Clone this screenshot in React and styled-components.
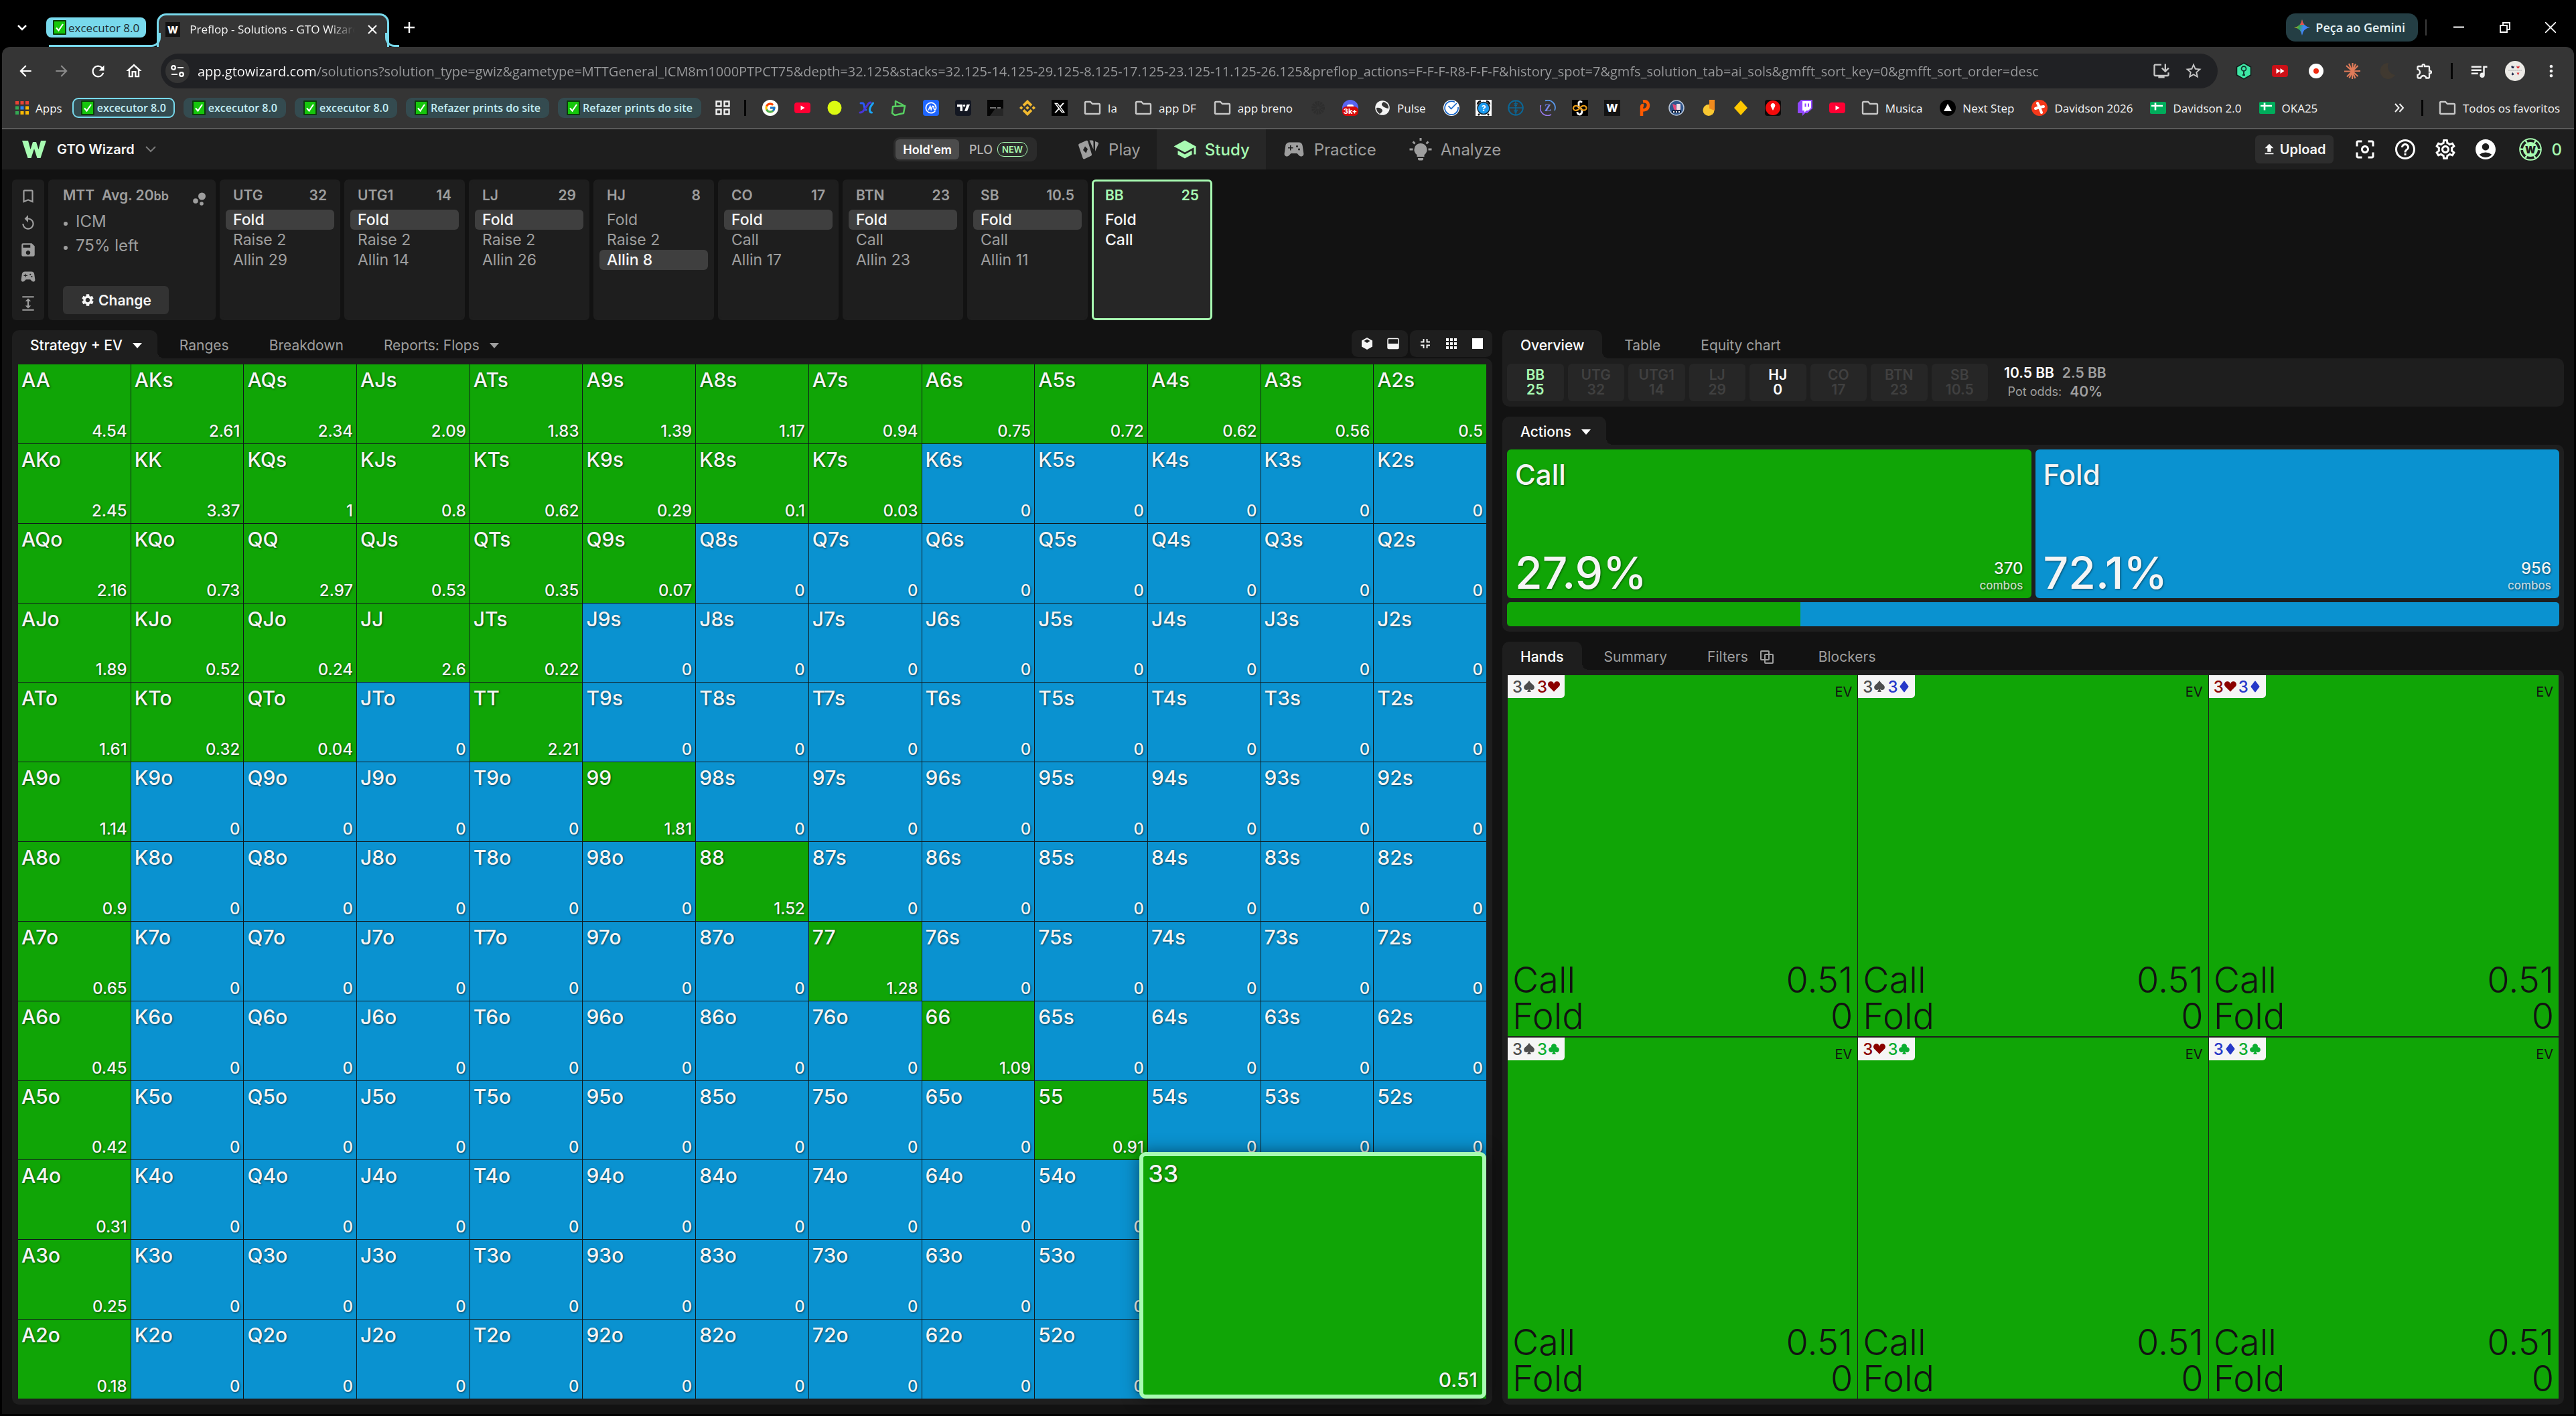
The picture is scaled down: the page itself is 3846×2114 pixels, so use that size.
import React from "react";
import styled, { createGlobalStyle, css } from "styled-components";
import {
  MdAccountCircle,
  MdArrowBack,
  MdArrowForward,
  MdBookmarkBorder,
  MdCenterFocusWeak,
  MdExpand,
  MdHelpOutline,
  MdMoreVert,
  MdOutlineExtension,
  MdOutlineHome,
  MdOutlineInstallDesktop,
  MdOutlineSettings,
  MdQueueMusic,
  MdRefresh,
  MdReplay,
  MdSave,
  MdSchool,
  MdSettings,
  MdSportsEsports,
  MdStarBorder,
  MdUpload,
} from "react-icons/md";
import {
  BsSuitClubFill,
  BsSuitDiamondFill,
  BsSuitHeartFill,
  BsSuitSpadeFill,
} from "react-icons/bs";
import { FcGoogle } from "react-icons/fc";
import { FaXTwitter } from "react-icons/fa6";
import { SiBinance } from "react-icons/si";

const GREEN = "#10a506";
const BLUE = "#0a92d0";
const MINT = "#a8fbb2";

const RANKS = ["A", "K", "Q", "J", "T", "9", "8", "7", "6", "5", "4", "3", "2"];

// EV per row, cells left out are 0
const EVS = [
  [4.54, 2.61, 2.34, 2.09, 1.83, 1.39, 1.17, 0.94, 0.75, 0.72, 0.62, 0.56, 0.5],
  [2.45, 3.37, 1, 0.8, 0.62, 0.29, 0.1, 0.03],
  [2.16, 0.73, 2.97, 0.53, 0.35, 0.07],
  [1.89, 0.52, 0.24, 2.6, 0.22],
  [1.61, 0.32, 0.04, 0, 2.21],
  [1.14, 0, 0, 0, 0, 1.81],
  [0.9, 0, 0, 0, 0, 0, 1.52],
  [0.65, 0, 0, 0, 0, 0, 0, 1.28],
  [0.45, 0, 0, 0, 0, 0, 0, 0, 1.09],
  [0.42, 0, 0, 0, 0, 0, 0, 0, 0, 0.91],
  [0.31],
  [0.25],
  [0.18],
];

const handName = (r, c) => {
  if (r === c) return RANKS[r] + RANKS[c];
  return r < c ? RANKS[r] + RANKS[c] + "s" : RANKS[c] + RANKS[r] + "o";
};

const positions = [
  { name: "UTG", stack: "32", actions: ["Fold", "Raise 2", "Allin 29"], picked: 0 },
  { name: "UTG1", stack: "14", actions: ["Fold", "Raise 2", "Allin 14"], picked: 0 },
  { name: "LJ", stack: "29", actions: ["Fold", "Raise 2", "Allin 26"], picked: 0 },
  { name: "HJ", stack: "8", actions: ["Fold", "Raise 2", "Allin 8"], picked: 2 },
  { name: "CO", stack: "17", actions: ["Fold", "Call", "Allin 17"], picked: 0 },
  { name: "BTN", stack: "23", actions: ["Fold", "Call", "Allin 23"], picked: 0 },
  { name: "SB", stack: "10.5", actions: ["Fold", "Call", "Allin 11"], picked: 0 },
  { name: "BB", stack: "25", actions: ["Fold", "Call"], active: true },
];

const players = [
  { name: "BB", stack: "25", tone: "hero" },
  { name: "UTG", stack: "32" },
  { name: "UTG1", stack: "14" },
  { name: "LJ", stack: "29" },
  { name: "HJ", stack: "0", tone: "villain" },
  { name: "CO", stack: "17" },
  { name: "BTN", stack: "23" },
  { name: "SB", stack: "10.5" },
];

const SUITS = {
  s: { color: "#4d4d4d", Icon: BsSuitSpadeFill },
  h: { color: "#8b0000", Icon: BsSuitHeartFill },
  d: { color: "#2638c8", Icon: BsSuitDiamondFill },
  c: { color: "#0bad30", Icon: BsSuitClubFill },
};
const combos = ["sh", "sd", "hd", "sc", "hc", "dc"];

const URL_TEXT =
  "app.gtowizard.com/solutions?solution_type=gwiz&gametype=MTTGeneral_ICM8m1000PTPCT75&depth=32.125&stacks=32.125-14.125-29.125-8.125-17.125-23.125-11.125-26.125&preflop_actions=F-F-F-R8-F-F-F&history_spot=7&gmfs_solution_tab=ai_sols&gmfft_sort_key=0&gmfft_sort_order=desc";

const Check = () => (
  <svg width="20" height="22" viewBox="0 0 20 22">
    <rect width="20" height="22" rx="1" fill="#0b3d0b" />
    <rect x="2" y="2" width="16" height="18" fill="#16c60c" />
    <path d="M5 11.5l3.5 4L15 6" fill="none" stroke="#fff" strokeWidth="2.2" />
  </svg>
);

const FolderIcon = () => (
  <svg width="26" height="24" viewBox="0 0 26 24" fill="none" stroke="#c7c7c7" strokeWidth="2.4">
    <path d="M2 4.500Q2 3 3.500 3H10l3 3h9.500Q24 6 24 7.500V19.500Q24 21 22.500 21H3.500Q2 21 2 19.500z" />
  </svg>
);

const YoutubeIcon = () => (
  <svg width="24" height="24" viewBox="0 0 24 24">
    <rect y="4" width="24" height="16" rx="4" fill="#ff0033" />
    <path d="M9.500 8.500v7l6-3.500z" fill="#fff" />
  </svg>
);

const SheetIcon = () => (
  <svg width="24" height="24" viewBox="0 0 24 24">
    <rect y="3" width="24" height="18" rx="2" fill="#00ac5b" />
    <path d="M2 9h17M8 4.500v11" stroke="#fff" strokeWidth="2.6" />
  </svg>
);

const WFavicon = ({ size = 22 }) => (
  <svg width={size} height={size} viewBox="0 0 22 22">
    <rect width="22" height="22" fill="#131313" />
    <text x="11" y="16.500" textAnchor="middle" fontFamily="Inter, sans-serif" fontWeight="800" fontSize="15" fill="#fff">
      W
    </text>
  </svg>
);

const favs = [
  {
    id: "google",
    icon: (
      <svg width="24" height="24" viewBox="0 0 24 24">
        <circle cx="12" cy="12" r="12" fill="#fff" />
        <FcGoogle x={3} y={3} size={18} />
      </svg>
    ),
  },
  { id: "youtube", icon: <YoutubeIcon /> },
  {
    id: "lime",
    icon: (
      <svg width="24" height="24" viewBox="0 0 24 24">
        <circle cx="12" cy="12" r="10.500" fill="#dcfa12" />
      </svg>
    ),
  },
  {
    id: "wave",
    icon: (
      <svg width="24" height="24" viewBox="0 0 24 24" fill="none" strokeWidth="3" strokeLinecap="round">
        <path d="M3 5h2.500q2 0 2.500 3l1 5q.5 2 2 2" stroke="#2a5bff" />
        <path d="M2 19q4 0 6-4l5-7q2-4 5-4" stroke="#4a35d8" />
        <path d="M19.500 19q-3 0-3-4t5-10" stroke="#1ba4f5" />
      </svg>
    ),
  },
  {
    id: "bag",
    icon: (
      <svg width="24" height="24" viewBox="0 0 24 24" fill="none" stroke="#58cf62" strokeWidth="2.500" strokeLinejoin="round">
        <path d="M3 10l18-1-2 11-13 3-4-3z" />
        <path d="M7 9V2l12 6" />
      </svg>
    ),
  },
  {
    id: "cmc",
    icon: (
      <svg width="24" height="24" viewBox="0 0 24 24" fill="none" stroke="#fff" strokeWidth="1.700">
        <rect width="24" height="24" rx="4" fill="#1f66ff" stroke="none" />
        <path d="M18.500 16a7.600 7.600 0 1 1 1.100-4.500q0 3-1.800 2.800T16.200 12V10l-2-.5-2 5-1.500-5-2.500 6" />
      </svg>
    ),
  },
  {
    id: "tv",
    icon: (
      <svg width="24" height="24" viewBox="0 0 24 24" fill="#fff">
        <rect width="24" height="24" rx="4" fill="#131722" />
        <path d="M3 7h8v10H7.500v-6.500H3z" />
        <circle cx="13.500" cy="8.700" r="1.700" />
        <path d="M17.500 7H22l-4 10h-4z" />
      </svg>
    ),
  },
  {
    id: "black",
    icon: (
      <svg width="24" height="24" viewBox="0 0 24 24">
        <rect width="24" height="24" fill="#050505" />
        <path d="M4 24l8-11h12v11z" fill="#262626" />
        <path d="M4 12h9M15 12h5" stroke="#777" strokeWidth="2" />
      </svg>
    ),
  },
  { id: "binance", icon: <SiBinance size={24} color="#f3ba2f" /> },
  {
    id: "x",
    icon: (
      <svg width="24" height="24" viewBox="0 0 24 24">
        <rect width="24" height="24" fill="#000" />
        <FaXTwitter x={3} y={3} size={18} color="#fff" />
      </svg>
    ),
  },
  { id: "ia", icon: <FolderIcon />, label: "Ia" },
  { id: "appdf", icon: <FolderIcon />, label: "app DF" },
  { id: "appbreno", icon: <FolderIcon />, label: "app breno" },
  {
    id: "faded",
    icon: (
      <svg width="24" height="24" viewBox="0 0 24 24">
        <circle cx="12" cy="12" r="6" fill="none" stroke="#2e2e2e" strokeWidth="8" strokeDasharray="2 1" />
      </svg>
    ),
  },
  {
    id: "discord",
    icon: (
      <svg width="24" height="24" viewBox="0 0 24 24">
        <circle cx="12" cy="12" r="12" fill="#5865f2" />
        <path d="M7 10q0-3 3-3h4q3 0 3 3z" fill="#fff" />
        <rect y="10" width="24" height="14" rx="6" fill="#d60909" />
        <text x="12" y="21" textAnchor="middle" fontFamily="Inter, sans-serif" fontWeight="700" fontSize="11" fill="#fff">
          3k+
        </text>
      </svg>
    ),
  },
  {
    id: "pulse",
    label: "Pulse",
    icon: (
      <svg width="24" height="24" viewBox="0 0 24 24">
        <circle cx="12" cy="12" r="10.800" fill="#f4f4f4" />
        <path d="M3 12q5-1 8 2t-3 7Q3 18 3 12zM14 3q-5 3-2 6t9 4q1-7-7-10z" fill="#353535" />
      </svg>
    ),
  },
  {
    id: "clock",
    icon: (
      <svg width="24" height="24" viewBox="0 0 24 24" fill="none" stroke="#1565c8">
        <circle cx="12" cy="12" r="12" fill="#fff" stroke="none" />
        <path d="M17 3.500A10 10 0 1 0 22 11" strokeWidth="1.700" />
        <path d="M7.500 9l4 4.500L20 5" strokeWidth="1.700" />
      </svg>
    ),
  },
  {
    id: "alarm",
    icon: (
      <svg width="24" height="24" viewBox="0 0 24 24">
        <rect width="24" height="24" fill="#fff" />
        <path d="M6 21l-2 2M18 21l2 2M3 7q0-4 5-5M21 7q0-4-5-5" stroke="#111" strokeWidth="2.500" />
        <circle cx="12" cy="12.500" r="9" fill="#1c9bf0" stroke="#10202c" strokeWidth="1.500" />
        <text x="12" y="17" textAnchor="middle" fontFamily="Inter, sans-serif" fontWeight="700" fontSize="12" fill="#fff">
          ?
        </text>
      </svg>
    ),
  },
  {
    id: "scope",
    icon: (
      <svg width="24" height="24" viewBox="0 0 24 24" fill="none" stroke="#0b6796" strokeWidth="1.400">
        <circle cx="12" cy="12" r="10.800" strokeWidth="2" />
        <path d="M1 12h22M12 2v20M9 6h6M10 8.500h4M9 15.500h6M10 18h4" />
      </svg>
    ),
  },
  {
    id: "zring",
    icon: (
      <svg width="24" height="24" viewBox="0 0 24 24" fill="none" strokeWidth="1.700">
        <path d="M8 1.500A11 11 0 0 1 22 16" stroke="#5b9bf0" />
        <path d="M1.500 8A11 11 0 0 0 17 22" stroke="#9b7bf0" />
        <text x="12" y="17" textAnchor="middle" fontFamily="Liberation Serif, serif" fontWeight="700" fontSize="15" fill="#7f8cf0">
          Z
        </text>
      </svg>
    ),
  },
  {
    id: "knot",
    icon: (
      <svg width="24" height="24" viewBox="0 0 24 24" fill="none" strokeWidth="2.800">
        <rect width="24" height="24" fill="#000" />
        <path d="M15 4q-3-3-5 0v7q5 2 5 6t-3 5q-4 0-4-4" stroke="#fff" />
        <path d="M12 12q-5-5-9-2-3 4 2 6 4 0 7-4t7-3q5 3 1 6-4 2-8-3z" stroke="#e69a17" strokeWidth="2.200" />
      </svg>
    ),
  },
  { id: "wizard", icon: <WFavicon size={24} /> },
  {
    id: "orange",
    icon: (
      <svg width="24" height="24" viewBox="0 0 24 24" fill="none" stroke="#ff5a00" strokeWidth="4.500">
        <path d="M8 24V11q0-3 3-3M10 2.500q7-1 8 5 0 8-9 8" />
      </svg>
    ),
  },
  {
    id: "badge",
    icon: (
      <svg width="24" height="24" viewBox="0 0 24 24">
        <circle cx="12" cy="12" r="11" fill="#30568c" stroke="#b9c6d8" strokeWidth="1.500" />
        <path d="M6 6l5 2 1 9-4-3z" fill="#e8487c" />
        <rect x="12" y="6" width="6" height="9" rx="1" fill="#f2dbe4" />
        <path d="M5 17.500h14" stroke="#0d1b33" strokeWidth="4" />
        <path d="M7 18h2M11 18h2M15 18h2" stroke="#fff" strokeWidth="2" />
      </svg>
    ),
  },
  {
    id: "medal",
    icon: (
      <svg width="24" height="24" viewBox="0 0 24 24">
        <circle cx="12" cy="15.500" r="8.500" fill="#f9c832" />
        <path d="M13 0h8v16l-8-3z" fill="#f08a1d" />
      </svg>
    ),
  },
  {
    id: "diamond",
    icon: (
      <svg width="24" height="24" viewBox="0 0 24 24">
        <path d="M12 1l10 11-10 11L2 12z" fill="#ffc800" />
      </svg>
    ),
  },
  {
    id: "pin",
    icon: (
      <svg width="24" height="24" viewBox="0 0 24 24">
        <rect width="24" height="24" rx="4" fill="#0c0c0c" />
        <circle cx="12" cy="12" r="11" fill="#f50b0b" />
        <path d="M12 5a3.500 3.500 0 0 1 3 5l-3 6-3-6a3.500 3.500 0 0 1 3-5z" fill="#fff" />
      </svg>
    ),
  },
  {
    id: "twitch",
    icon: (
      <svg width="24" height="24" viewBox="0 0 24 24">
        <path d="M6 0h17v13l-8 7h-3l-4 4v-4H1V5z" fill="#9146ff" />
        <path d="M8 2h13v10l-4 4h-3l-3 3v-3H8z" fill="#fff" />
        <path d="M12.500 5.500v5M17 5.500v5" stroke="#9146ff" strokeWidth="2" />
      </svg>
    ),
  },
  { id: "youtube2", icon: <YoutubeIcon /> },
  { id: "musica", icon: <FolderIcon />, label: "Musica" },
  {
    id: "next",
    label: "Next Step",
    icon: (
      <svg width="24" height="24" viewBox="0 0 24 24">
        <circle cx="12" cy="12" r="12" fill="#000" />
        <path d="M12 6l6 11H6z" fill="#fff" />
      </svg>
    ),
  },
  {
    id: "dav26",
    label: "Davidson 2026",
    icon: (
      <svg width="24" height="24" viewBox="0 0 24 24">
        <circle cx="12" cy="12" r="12" fill="#f5391b" />
        <path d="M9 5l3 6 6-1M6 13l6-2 3 8" fill="none" stroke="#fff" strokeWidth="4" strokeLinecap="round" />
      </svg>
    ),
  },
  { id: "dav20", icon: <SheetIcon />, label: "Davidson 2.0" },
  { id: "oka25", icon: <SheetIcon />, label: "OKA25" },
];

const bookmarkChips = [
  { id: 1, text: "excecutor 8.0", open: true },
  { id: 2, text: "excecutor 8.0" },
  { id: 3, text: "excecutor 8.0" },
  { id: 4, text: "Refazer prints do site" },
  { id: 5, text: "Refazer prints do site" },
];

const extensions = [
  {
    id: "key",
    icon: (
      <svg width="24" height="26" viewBox="0 0 24 26">
        <path d="M12 1l10.500 6v12L12 25 1.500 19V7z" fill="#3ee6a4" stroke="#101b18" strokeWidth="1.500" />
        <circle cx="12" cy="9.500" r="3.500" fill="none" stroke="#123a30" strokeWidth="1.800" />
        <path d="M12 12v8M14 19h-4" stroke="#123a30" strokeWidth="2" />
      </svg>
    ),
  },
  {
    id: "speed",
    icon: (
      <svg width="24" height="24" viewBox="0 0 24 24">
        <rect y="3" width="24" height="18" rx="4" fill="#cc1017" />
        <path d="M6.500 8v8l6-4zM12.500 8v8l6-4z" fill="#fff" />
      </svg>
    ),
  },
  {
    id: "rec",
    icon: (
      <svg width="24" height="24" viewBox="0 0 24 24">
        <circle cx="12" cy="12" r="11" fill="#fff" />
        <circle cx="12" cy="12" r="4" fill="#ee2b12" />
      </svg>
    ),
  },
  {
    id: "burst",
    icon: (
      <svg width="24" height="24" viewBox="0 0 24 24" stroke="#e07b59" strokeWidth="2.200">
        <path d="M12.500 0L12 24M0 12.500L24 12M3 4l17.500 16M20.500 4L4 20.500M7 1l9.500 22M17 1.500L7.500 22.500" />
      </svg>
    ),
  },
  {
    id: "moon",
    icon: (
      <svg width="24" height="24" viewBox="0 0 24 24">
        <path d="M12 0A12 12 0 1 0 22 18 13 13 0 0 1 12 0z" fill="#403930" />
      </svg>
    ),
  },
  { id: "puzzle", icon: <MdOutlineExtension size={28} color="#f1f1f1" /> },
];

const CardsIcon = () => (
  <svg width="36" height="36" viewBox="0 0 36 36" fill="#9e9e9e">
    <path
      fillRule="evenodd"
      d="M4.500 9.500L14.500 5q2-.8 2.800 1.200l5.700 19q.6 1.800-1.200 2.600l-9.500 4.500q-2 .8-2.700-1.200L3.200 12Q2.700 10.300 4.500 9.500zM13 13.500l-3 5.500 4.500 4.500 2.500-6z"
    />
    <path d="M20 4.500h3.500q2 0 2 2V18l-6-13.500zM28 6l4 1.500q1.700.7 1 2.500L28 21z" />
  </svg>
);

const BulbIcon = () => (
  <svg width="36" height="36" viewBox="0 0 36 36" fill="#9e9e9e">
    <path d="M18 9a9.500 9.500 0 0 1 5.500 17.200V29h-11v-2.800A9.500 9.500 0 0 1 18 9zM14 31h8v1.500q0 2-2 2h-4q-2 0-2-2z" />
    <path d="M18 1v4M1.500 18h5M29.500 18h5M6.500 6.500l3 3M29.500 6.500l-3 3" stroke="#9e9e9e" strokeWidth="3" />
  </svg>
);

const ChipIcon = () => (
  <svg width="34" height="34" viewBox="0 0 34 34">
    <circle cx="17" cy="17" r="15.800" fill="none" stroke={MINT} strokeWidth="2" />
    <circle cx="17" cy="17" r="13" fill="none" stroke={MINT} strokeWidth="4" strokeDasharray="2.600 11" strokeDashoffset="1.300" />
    <circle cx="17" cy="17" r="11" fill={MINT} />
    <text x="17" y="22.500" textAnchor="middle" fontFamily="Inter, sans-serif" fontWeight="900" fontSize="15" fill="#1e1e1e">
      W
    </text>
  </svg>
);

const Logo = () => (
  <svg width="36" height="28" viewBox="0 0 36 28" fill={MINT}>
    <path d="M0 1h9l3.500 13L16 3h5l3.500 11L28 1h8l-8.500 26h-5L18 13l-4.500 14h-5z" />
  </svg>
);

const Gemini = () => (
  <svg width="24" height="24" viewBox="0 0 24 24">
    <defs>
      <linearGradient id="gem" x1="0" y1="0.300" x2="1" y2="0.600">
        <stop offset="0" stopColor="#f9ab00" />
        <stop offset="0.350" stopColor="#34a853" />
        <stop offset="0.600" stopColor="#4285f4" />
        <stop offset="1" stopColor="#3b7df5" />
      </linearGradient>
    </defs>
    <path d="M12 0q1.500 10.500 12 12-10.500 1.500-12 12Q10.500 13.500 0 12 10.500 10.500 12 0z" fill="url(#gem)" />
    <path d="M12 0q.8 5 3.500 8H8.500Q11.200 5 12 0z" fill="#e8504a" />
  </svg>
);

const Caret = () => (
  <CaretSvg width="14" height="8" viewBox="0 0 14 8" fill="currentColor">
    <path d="M0 0h14L7 8z" />
  </CaretSvg>
);

const CloneIcon = () => (
  <CloneSvg width="20" height="20" viewBox="0 0 20 20" fill="none" stroke="currentColor" strokeWidth="2">
    <rect x="1" y="1" width="12" height="13" rx="1" />
    <rect x="7" y="6" width="12" height="13" rx="1" />
  </CloneSvg>
);

function BrowserTabs() {
  return (
    <TabStrip>
      <StripButton aria-label="Search tabs">
        <svg width="16" height="10" viewBox="0 0 16 10" fill="none" stroke="#fff" strokeWidth="2.500">
          <path d="M2 2l6 6 6-6" />
        </svg>
      </StripButton>
      <TabGroup>
        <GroupChip>
          <Check />
          excecutor 8.0
        </GroupChip>
      </TabGroup>
      <BrowserTab>
        <WFavicon />
        <TabTitle>Preflop - Solutions - GTO Wizard</TabTitle>
        <TabClose aria-label="Close tab">
          <svg width="14" height="14" viewBox="0 0 14 14" stroke="#fff" strokeWidth="2">
            <path d="M1 1l12 12M13 1L1 13" />
          </svg>
        </TabClose>
      </BrowserTab>
      <StripButton aria-label="New tab">
        <svg width="16" height="16" viewBox="0 0 16 16" stroke="#fff" strokeWidth="2.400">
          <path d="M8 0v16M0 8h16" />
        </svg>
      </StripButton>
      <Spacer />
      <GeminiButton>
        <Gemini />
        Peça ao Gemini
      </GeminiButton>
      <StripDivider />
      <WindowButton aria-label="Minimize">
        <svg width="16" height="16" viewBox="0 0 16 16" stroke="#fff" strokeWidth="2">
          <path d="M0 7.500h16" />
        </svg>
      </WindowButton>
      <WindowButton aria-label="Restore">
        <svg width="16" height="16" viewBox="0 0 16 16" fill="none" stroke="#fff" strokeWidth="1.800">
          <path d="M1 5h10v10H1zM5 5V1h10v10h-4" />
        </svg>
      </WindowButton>
      <WindowButton aria-label="Close">
        <svg width="16" height="16" viewBox="0 0 16 16" stroke="#fff" strokeWidth="1.600">
          <path d="M0 0l16 16M16 0L0 16" />
        </svg>
      </WindowButton>
    </TabStrip>
  );
}

function BrowserToolbar() {
  return (
    <Toolbar>
      <NavRow>
        <NavButton aria-label="Back">
          <MdArrowBack size={26} color="#fff" />
        </NavButton>
        <NavButton aria-label="Forward">
          <MdArrowForward size={26} color="#8a8a8a" />
        </NavButton>
        <NavButton aria-label="Reload">
          <MdRefresh size={27} color="#fff" />
        </NavButton>
        <NavButton aria-label="Home">
          <MdOutlineHome size={28} color="#fff" />
        </NavButton>
        <Omnibox>
          <SiteInfo aria-label="Site information">
            <svg width="20" height="18" viewBox="0 0 20 18" fill="none" stroke="#fff" strokeWidth="2.200">
              <circle cx="4" cy="4" r="2.800" />
              <path d="M10 4h9M1 14h9" />
              <circle cx="16" cy="14" r="2.800" />
            </svg>
          </SiteInfo>
          <UrlInput aria-label="Address" defaultValue={URL_TEXT} spellCheck={false} />
          <OmniButton aria-label="Install">
            <MdOutlineInstallDesktop size={28} />
          </OmniButton>
          <OmniButton aria-label="Bookmark this page">
            <MdStarBorder size={28} />
          </OmniButton>
        </Omnibox>
        {extensions.map(({ id, icon }) => (
          <NavButton key={id} aria-label={id}>
            {icon}
          </NavButton>
        ))}
        <Divider />
        <NavButton aria-label="Media">
          <MdQueueMusic size={30} color="#f1f1f1" />
        </NavButton>
        <NavButton aria-label="Profile">
          <svg width="30" height="30" viewBox="0 0 30 30">
            <circle cx="15" cy="15" r="15" fill="#eceae6" />
            <path d="M9 7l1.500 1.500L11.500 7l1 1.500L14 7l-1 4h-3zM11.500 17l2 3-2 1.500-2-1.500z" fill="#1d2748" />
            <path d="M17 7l1.500 1.500L19.500 7l1 1.500L22 7l-1 4h-3zM17.500 17.500h4l-2 4z" fill="#d8393f" />
            <path d="M5 14h20" stroke="#a5a5a5" strokeDasharray="2 1" />
          </svg>
        </NavButton>
        <NavButton aria-label="Menu">
          <MdMoreVert size={28} color="#f1f1f1" />
        </NavButton>
      </NavRow>
      <BookmarkRow>
        <Bookmark href="#apps">
          <svg width="20" height="20" viewBox="0 0 20 20">
            {["#ea4335", "#ea4335", "#ea4335", "#34a853", "#2f86f6", "#fbbc04", "#34a853", "#fbbc04", "#fbbc04"].map((fill, i) => (
              <rect key={i} x={(i % 3) * 7.5} y={Math.floor(i / 3) * 7.5} width="5" height="5" fill={fill} />
            ))}
          </svg>
          Apps
        </Bookmark>
        <ChipList>
          {bookmarkChips.map(({ id, text, open }) => (
            <BookmarkChip key={id} $open={open}>
              <Check />
              {text}
            </BookmarkChip>
          ))}
        </ChipList>
        <GridButton aria-label="Tab groups">
          <svg width="22" height="22" viewBox="0 0 22 22" fill="none" stroke="#f1f1f1" strokeWidth="2.400">
            <path d="M1.500 1.500h7v7h-7zM13.500 1.500h7v7h-7zM1.500 13.500h7v7h-7zM13.500 13.500h7v7h-7z" />
          </svg>
        </GridButton>
        <Divider />
        <FavList>
          {favs.map(({ id, icon, label }) => (
            <Bookmark key={id} href={"#" + id} aria-label={label || id} $labelled={!!label}>
              {icon}
              {label}
            </Bookmark>
          ))}
        </FavList>
        <Spacer />
        <NavButton aria-label="More bookmarks">
          <svg width="16" height="14" viewBox="0 0 16 14" fill="none" stroke="#f1f1f1" strokeWidth="2">
            <path d="M2 1l5.500 6L2 13M8.500 1L14 7l-5.500 6" />
          </svg>
        </NavButton>
        <BookmarkDivider />
        <Bookmark href="#all">
          <FolderIcon />
          Todos os favoritos
        </Bookmark>
      </BookmarkRow>
    </Toolbar>
  );
}

function AppHeader() {
  return (
    <Header>
      <Brand>
        <Logo />
        GTO Wizard
        <svg width="16" height="10" viewBox="0 0 16 10" fill="none" stroke="#7a7a7a" strokeWidth="2">
          <path d="M1 1l7 7 7-7" />
        </svg>
      </Brand>
      <HeaderNav>
        <GameSwitch>
          <GameOption $on>Hold'em</GameOption>
          <GameOption>
            PLO <NewTag>NEW</NewTag>
          </GameOption>
        </GameSwitch>
        <NavLink href="#play">
          <CardsIcon />
          Play
        </NavLink>
        <NavLink href="#study" $on>
          <MdSchool size={36} />
          Study
        </NavLink>
        <NavLink href="#practice">
          <MdSportsEsports size={36} />
          Practice
        </NavLink>
        <NavLink href="#analyze">
          <BulbIcon />
          Analyze
        </NavLink>
      </HeaderNav>
      <HeaderTools>
        <UploadButton>
          <MdUpload size={22} />
          Upload
        </UploadButton>
        <ToolButton aria-label="Focus">
          <MdCenterFocusWeak size={36} />
        </ToolButton>
        <ToolButton aria-label="Help">
          <MdHelpOutline size={36} />
        </ToolButton>
        <ToolButton aria-label="Settings">
          <MdOutlineSettings size={36} />
        </ToolButton>
        <ToolButton aria-label="Account">
          <MdAccountCircle size={36} />
        </ToolButton>
        <Credits>
          <ChipIcon />0
        </Credits>
      </HeaderTools>
    </Header>
  );
}

function SpotBar() {
  return (
    <SpotRow>
      <Rail>
        <RailButton aria-label="Bookmark">
          <MdBookmarkBorder size={26} />
        </RailButton>
        <RailButton aria-label="Undo">
          <MdReplay size={26} />
        </RailButton>
        <RailButton aria-label="Save">
          <MdSave size={26} />
        </RailButton>
        <RailButton aria-label="Practice">
          <MdSportsEsports size={26} />
        </RailButton>
        <RailButton aria-label="Expand">
          <MdExpand size={26} />
        </RailButton>
      </Rail>
      <Setup>
        <SetupTitle>
          <span>MTT</span>
          <span>
            Avg. 20<Small>bb</Small>
          </span>
          <Bubbles width="20" height="20" viewBox="0 0 20 20" fill="#9e9e9e">
            <circle cx="13.500" cy="6" r="5.500" />
            <circle cx="4" cy="13" r="3.800" />
            <circle cx="13" cy="17" r="2.800" />
          </Bubbles>
        </SetupTitle>
        <SetupList>
          <li>ICM</li>
          <li>75% left</li>
        </SetupList>
        <ChangeButton>
          <MdSettings size={22} />
          Change
        </ChangeButton>
      </Setup>
      {positions.map(({ name, stack, actions, picked, active }) => (
        <SpotCard key={name} $active={active}>
          <SpotHead>
            <span>{name}</span>
            <span>{stack}</span>
          </SpotHead>
          {actions.map((action, i) => (
            <SpotAction key={action} $on={picked === i} $active={active}>
              {action}
            </SpotAction>
          ))}
        </SpotCard>
      ))}
    </SpotRow>
  );
}

function RangeMatrix() {
  return (
    <Matrix>
      {RANKS.map((_, r) =>
        RANKS.map((_, c) => {
          const ev = EVS[r][c] || 0;
          const name = handName(r, c);
          // the enlarged hand sits over the last nine cells
          if (r > 9 && c > 9) return <Cell key={name} $green={r === c} aria-label={name} />;
          return (
            <Cell key={name} $green={ev > 0}>
              <CellName>{name}</CellName>
              <CellEv>{ev}</CellEv>
            </Cell>
          );
        })
      )}
      <Zoomed>
        <ZoomedName>33</ZoomedName>
        <ZoomedEv>0.51</ZoomedEv>
      </Zoomed>
    </Matrix>
  );
}

function LeftColumn() {
  return (
    <Column>
      <Tabs>
        <Tab $on>
          Strategy + EV
          <Caret />
        </Tab>
        <Tab>Ranges</Tab>
        <Tab>Breakdown</Tab>
        <Tab>
          Reports: Flops
          <Caret />
        </Tab>
        <Spacer />
        <ViewGroup>
          <ViewButton aria-label="3D view">
            <svg width="18" height="18" viewBox="0 0 18 18">
              <path d="M9 0l8 4.500v9L9 18l-8-4.500v-9z" fill="#f5f5f5" />
              <path d="M9 2.500L13.500 5 9 8 4.500 5z" fill="#1e1e1e" />
            </svg>
          </ViewButton>
          <ViewButton aria-label="Half view">
            <svg width="18" height="18" viewBox="0 0 18 18">
              <rect x="1" y="1.500" width="16" height="15" rx="1.500" fill="none" stroke="#f5f5f5" strokeWidth="1.500" />
              <path d="M1 9h16v8H1z" fill="#f5f5f5" />
            </svg>
          </ViewButton>
        </ViewGroup>
        <ViewGroup>
          <ViewButton aria-label="Compact">
            <svg width="18" height="18" viewBox="0 0 18 18" fill="none" stroke="#f5f5f5" strokeWidth="2">
              <path d="M2 6.500h4.500V2M11.500 2v4.500H16M2 11.500h4.500V16M16 11.500h-4.500V16" />
            </svg>
          </ViewButton>
          <ViewButton aria-label="Grid">
            <svg width="18" height="18" viewBox="0 0 18 18" fill="#f5f5f5">
              {[0, 1, 2, 3, 4, 5, 6, 7, 8].map((i) => (
                <rect key={i} x={1 + (i % 3) * 6} y={1 + Math.floor(i / 3) * 6} width="4" height="4" />
              ))}
            </svg>
          </ViewButton>
          <ViewButton aria-label="Solid">
            <svg width="18" height="18" viewBox="0 0 18 18">
              <rect x="1" y="1" width="16" height="16" fill="#fff" />
            </svg>
          </ViewButton>
        </ViewGroup>
      </Tabs>
      <Panel $grow $pad="9px">
        <RangeMatrix />
      </Panel>
    </Column>
  );
}

function Overview() {
  return (
    <section>
      <Tabs>
        <Tab $on>Overview</Tab>
        <Tab>Table</Tab>
        <Tab>Equity chart</Tab>
      </Tabs>
      <Panel $pad="8px 7px">
        <PlayerRow>
          <Players>
            {players.map(({ name, stack, tone }) => (
              <Player key={name} $tone={tone}>
                <span>{name}</span>
                <span>{stack}</span>
              </Player>
            ))}
          </Players>
          <Pot>
            <PotLine>
              <Strong>10.5 BB</Strong>
              <span>2.5 BB</span>
            </PotLine>
            <PotLine>
              <Odds>Pot odds:</Odds>
              <span>40%</span>
            </PotLine>
          </Pot>
        </PlayerRow>
      </Panel>
    </section>
  );
}

function Actions() {
  return (
    <section>
      <Tabs>
        <Tab $on>
          Actions
          <Caret />
        </Tab>
      </Tabs>
      <Panel $pad="7px 7px 8px">
        <ActionRow>
          <ActionCard $color={GREEN}>
            <ActionName>Call</ActionName>
            <ActionFoot>
              <Percent>27.9%</Percent>
              <Combos>
                370 <small>combos</small>
              </Combos>
            </ActionFoot>
          </ActionCard>
          <ActionCard $color={BLUE}>
            <ActionName>Fold</ActionName>
            <ActionFoot>
              <Percent>72.1%</Percent>
              <Combos>
                956 <small>combos</small>
              </Combos>
            </ActionFoot>
          </ActionCard>
        </ActionRow>
        <Bar>
          <BarPart $color={GREEN} style={{ width: "27.9%" }} />
          <BarPart $color={BLUE} style={{ width: "72.1%" }} />
        </Bar>
      </Panel>
    </section>
  );
}

function Suited({ suit }) {
  const { color, Icon } = SUITS[suit];
  return (
    <HalfCard $color={color}>
      3<Icon size={18} />
    </HalfCard>
  );
}

function Hands() {
  return (
    <HandsSection>
      <Tabs>
        <Tab $on>Hands</Tab>
        <Tab>Summary</Tab>
        <Tab>
          Filters
          <CloneIcon />
        </Tab>
        <Tab>Blockers</Tab>
      </Tabs>
      <Panel $grow $pad="8px 8px 9px">
        <HandGrid>
          {combos.map((combo) => (
            <Hand key={combo}>
              <HandTop>
                <HandCards>
                  <Suited suit={combo[0]} />
                  <Suited suit={combo[1]} />
                </HandCards>
                <EvLabel>EV</EvLabel>
              </HandTop>
              <div>
                <HandLine>
                  <span>Call</span>
                  <span>0.51</span>
                </HandLine>
                <HandLine>
                  <span>Fold</span>
                  <span>0</span>
                </HandLine>
              </div>
            </Hand>
          ))}
        </HandGrid>
      </Panel>
    </HandsSection>
  );
}

function App() {
  return (
    <Window>
      <GlobalStyle />
      <BrowserTabs />
      <BrowserToolbar />
      <AppHeader />
      <Page>
        <SpotBar />
        <Columns>
          <LeftColumn />
          <RightColumn>
            <Overview />
            <Actions />
            <Hands />
          </RightColumn>
        </Columns>
      </Page>
    </Window>
  );
}

export default App;

const GlobalStyle = createGlobalStyle`
  * {
    box-sizing: border-box;
  }
  body {
    margin: 0;
    background: #000;
    color: #f5f5f5;
    font-family: Inter, sans-serif;
    font-size: 20px;
  }
  button {
    font: inherit;
    color: inherit;
    background: none;
    border: 0;
    padding: 0;
    cursor: pointer;
  }
  svg {
    display: block;
    flex-shrink: 0;
  }
`;
const Window = styled.div`
  min-height: 100vh;
  display: flex;
  flex-direction: column;
  padding: 0 3px 3px;
`;
const Spacer = styled.div`
  flex: 1;
`;

/* browser */
const TabStrip = styled.div`
  display: flex;
  height: 70px;
  padding-right: 8px;
  font-family: "Open Sans", sans-serif;
  font-size: 17px;
`;
const StripButton = styled.button`
  display: flex;
  align-items: center;
  justify-content: center;
  width: 60px;
  padding-top: 12px;
`;
const TabGroup = styled.div`
  position: relative;
  padding: 26px 16px 0 6px;
  &::after {
    content: "";
    position: absolute;
    left: 10px;
    right: 13px;
    bottom: 0;
    height: 3px;
    background: #78d9ec;
  }
`;
const GroupChip = styled.button`
  display: flex;
  align-items: center;
  gap: 3px;
  height: 30px;
  padding: 0 10px;
  border-radius: 8px;
  background: #78d9ec;
  color: #1c2b30;
`;
const BrowserTab = styled.div`
  position: relative;
  display: flex;
  align-items: center;
  gap: 14px;
  width: 347px;
  height: 50px;
  margin-top: 20px;
  padding: 0 10px 6px 10px;
  border: 3px solid #78d9ec;
  border-bottom: 0;
  border-radius: 14px 14px 0 0;
  background: #353535;
  &::before,
  &::after {
    content: "";
    position: absolute;
    bottom: 0;
    width: 18px;
    height: 18px;
    border: 0 solid #78d9ec;
    border-bottom-width: 3px;
  }
  &::before {
    left: -18px;
    border-right-width: 3px;
    border-bottom-right-radius: 14px;
  }
  &::after {
    right: -18px;
    border-left-width: 3px;
    border-bottom-left-radius: 14px;
  }
`;
const TabTitle = styled.span`
  flex: 1;
  overflow: hidden;
  white-space: nowrap;
  mask-image: linear-gradient(90deg, #000 85%, transparent);
`;
const TabClose = styled.button`
  padding: 5px;
`;
const GeminiButton = styled.button`
  display: flex;
  align-items: center;
  gap: 8px;
  height: 42px;
  margin-top: 20px;
  padding: 0 19px 0 12px;
  border-radius: 14px;
  background: #243e44;
  color: #e6f2f4;
  font-size: 18px;
  font-weight: 600;
`;
const StripDivider = styled.div`
  width: 2px;
  height: 24px;
  margin: 29px 13px 0 11px;
  background: #3c3c3c;
`;
const WindowButton = styled.button`
  display: flex;
  align-items: center;
  justify-content: center;
  width: 69px;
  padding-top: 12px;
  height: 70px;
  &:last-child {
    width: 54px;
    margin-left: 7px;
  }
`;
const Toolbar = styled.div`
  background: #353535;
  border-radius: 12px 12px 0 0;
  border-bottom: 2px solid #5a5a5a;
  font-family: "Open Sans", sans-serif;
`;
const NavRow = styled.div`
  display: flex;
  align-items: center;
  height: 72px;
  padding: 0 7px 0 8px;
`;
const NavButton = styled.button`
  display: flex;
  align-items: center;
  justify-content: center;
  width: 54px;
  height: 48px;
`;
const Omnibox = styled.div`
  flex: 1;
  display: flex;
  align-items: center;
  height: 52px;
  margin: 0 12px 0 13px;
  padding: 0 12px 0 7px;
  border-radius: 26px;
  background: #202124;
`;
const SiteInfo = styled.button`
  display: flex;
  align-items: center;
  justify-content: center;
  width: 36px;
  height: 36px;
  border-radius: 50%;
  background: #353535;
`;
const UrlInput = styled.input`
  flex: 1;
  height: 40px;
  margin-left: 12px;
  padding: 0;
  border: 0;
  outline: 0;
  font-family: inherit;
  font-size: 20px;
  color: transparent;
  background: linear-gradient(90deg, #fff 176px, #9a9b9d 176px);
  background-clip: text;
`;
const OmniButton = styled.button`
  display: flex;
  align-items: center;
  justify-content: center;
  width: 48px;
  height: 40px;
  color: #c7c7c7;
`;
const Divider = styled.div`
  width: 3px;
  height: 24px;
  margin: 0 12px;
  background: #050505;
`;
const BookmarkDivider = styled(Divider)`
  margin: 0 11px 0 6px;
`;
const BookmarkRow = styled.div`
  display: flex;
  align-items: center;
  height: 49px;
  padding: 0 9px 11px 8px;
  font-size: 17px;
`;
const Bookmark = styled.a`
  display: flex;
  align-items: center;
  gap: 10px;
  height: 36px;
  padding: 0 ${({ $labelled }) => ($labelled ? 14 : 12)}px 0 12px;
  color: #f5f5f5;
  text-decoration: none;
  white-space: nowrap;
`;
const ChipList = styled.div`
  display: flex;
  gap: 13px;
  margin-left: 3px;
`;
const BookmarkChip = styled.button`
  display: flex;
  align-items: center;
  gap: 4px;
  height: 30px;
  padding: 0 11px;
  border: 2px solid ${({ $open }) => ($open ? "#78d9ec" : "#344b50")};
  border-radius: 9px;
  background: #344b50;
  color: #c5eef5;
  font-size: 16px;
  font-weight: 600;
  white-space: nowrap;
`;
const GridButton = styled.button`
  padding: 0 9px 0 21px;
`;
const FavList = styled.div`
  display: flex;
`;

/* app header */
const Header = styled.header`
  display: flex;
  justify-content: space-between;
  height: 60px;
  padding: 0 18px 0 30px;
  background: #1e1e1e;
`;
const Brand = styled.button`
  display: flex;
  align-items: center;
  gap: 16px;
  font-weight: 600;
`;
const HeaderNav = styled.nav`
  display: flex;
`;
const GameSwitch = styled.div`
  display: flex;
  align-self: center;
  height: 36px;
  margin-right: 35px;
  padding: 3px;
  border-radius: 9px;
  background: #2b2b2b;
`;
const GameOption = styled.button`
  display: flex;
  align-items: center;
  gap: 7px;
  padding: 0 11px;
  border-radius: 6px;
  font-size: 18px;
  font-weight: 600;
  ${({ $on }) =>
    $on
      ? css`
          background: #4c4c4c;
          color: #fff;
        `
      : css`
          padding-left: 15px;
          color: #b5b5b5;
          font-weight: 500;
        `}
`;
const NewTag = styled.span`
  padding: 0 6px;
  border: 1px solid ${MINT};
  border-radius: 10px;
  color: ${MINT};
  font-size: 13px;
  font-weight: 600;
  line-height: 20px;
`;
const NavLink = styled.a`
  display: flex;
  align-items: center;
  gap: 12px;
  padding: 0 24px;
  color: #9e9e9e;
  font-size: 24px;
  text-decoration: none;
  ${({ $on }) =>
    $on &&
    css`
      background: #272727;
      color: ${MINT};
      font-weight: 500;
    `}
`;
const HeaderTools = styled.div`
  display: flex;
  align-items: center;
  gap: 24px;
`;
const UploadButton = styled.button`
  display: flex;
  align-items: center;
  gap: 5px;
  height: 42px;
  margin-right: 5px;
  padding: 0 12px 0 10px;
  border-radius: 6px;
  background: #2d2d2d;
  font-weight: 600;
`;
const ToolButton = styled.button`
  color: #fff;
`;
const Credits = styled.button`
  display: flex;
  align-items: center;
  gap: 14px;
  margin-left: 8px;
  color: ${MINT};
  font-size: 24px;
  font-weight: 500;
`;

/* page */
const Page = styled.main`
  flex: 1;
  display: flex;
  flex-direction: column;
  gap: 15px;
  padding: 15px 15px 14px;
  background: #121212;
`;
const SpotRow = styled.div`
  display: flex;
  gap: 6px;
  height: 210px;
`;
const Rail = styled.div`
  display: flex;
  flex-direction: column;
  align-items: center;
  justify-content: space-between;
  width: 48px;
  padding: 12px 0;
  border-radius: 6px;
  background: #1e1e1e;
`;
const RailButton = styled.button`
  color: #9e9e9e;
`;
const Setup = styled.div`
  display: flex;
  flex-direction: column;
  align-items: flex-start;
  width: 250px;
  padding: 9px 14px 9px 22px;
  border-radius: 6px;
  background: #1e1e1e;
  color: #9e9e9e;
`;
const SetupTitle = styled.div`
  display: flex;
  gap: 11px;
  align-self: stretch;
  font-size: 21px;
  font-weight: 600;
  line-height: 30px;
`;
const Small = styled.span`
  font-size: 18px;
`;
const Bubbles = styled.svg`
  margin: 10px 0 0 auto;
`;
const SetupList = styled.ul`
  flex: 1;
  margin: 5px 0 0;
  padding-left: 19px;
  font-size: 24px;
  line-height: 36px;
  li::marker {
    font-size: 18px;
  }
`;
const ChangeButton = styled.button`
  display: flex;
  align-items: center;
  justify-content: center;
  gap: 5px;
  width: 158px;
  height: 42px;
  border-radius: 6px;
  background: #333;
  color: #f5f5f5;
  font-size: 21px;
  font-weight: 600;
`;
const SpotCard = styled.div`
  width: 180px;
  padding: 6px;
  border: 3px solid ${({ $active }) => ($active ? MINT : "#1e1e1e")};
  border-radius: 6px;
  background: ${({ $active }) => ($active ? "#262626" : "#1e1e1e")};
  color: ${({ $active }) => ($active ? MINT : "#9e9e9e")};
`;
const SpotHead = styled.div`
  display: flex;
  justify-content: space-between;
  margin-bottom: 6px;
  padding: 0 11px;
  font-size: 21px;
  font-weight: 600;
  line-height: 30px;
`;
const SpotAction = styled.button`
  display: block;
  width: 100%;
  padding: 0 11px;
  border-radius: 6px;
  font-size: 23px;
  line-height: 30px;
  text-align: left;
  background: ${({ $on }) => ($on ? "#3f3f3f" : "none")};
  color: ${({ $on, $active }) => ($on || $active ? "#f5f5f5" : "#9e9e9e")};
  font-weight: ${({ $on, $active }) => ($on || $active ? 500 : 400)};
`;
const Columns = styled.div`
  flex: 1;
  display: grid;
  grid-template-columns: minmax(0, 442fr) minmax(0, 317fr);
  gap: 15px;
`;
const Column = styled.div`
  display: flex;
  flex-direction: column;
`;
const RightColumn = styled(Column)`
  gap: 15px;
`;
const Tabs = styled.div`
  display: flex;
  gap: 6px;
  height: 42px;
`;
const Tab = styled.button`
  position: relative;
  display: flex;
  align-items: center;
  gap: 15px;
  padding: 3px 27px 0;
  color: #9e9e9e;
  font-size: 21px;
  ${({ $on }) =>
    $on &&
    css`
      border-radius: 10px 10px 0 0;
      background: #1e1e1e;
      color: #fff;
      font-weight: 500;
      &::after {
        content: "";
        position: absolute;
        left: 100%;
        bottom: 0;
        width: 10px;
        height: 10px;
        background: radial-gradient(circle at 100% 0, transparent 10px, #1e1e1e 10px);
      }
    `}
`;
const CaretSvg = styled.svg`
  margin-right: -4px;
`;
const CloneSvg = styled.svg`
  margin: 0 7px 0 3px;
`;
const Panel = styled.div`
  display: flex;
  flex-direction: column;
  flex-grow: ${({ $grow }) => ($grow ? 1 : 0)};
  padding: ${({ $pad }) => $pad};
  border-radius: 0 10px 10px 10px;
  background: #1e1e1e;
`;
const ViewGroup = styled.div`
  display: flex;
  align-items: center;
  height: 40px;
  padding: 0 3px;
  border-radius: 9px;
  background: #1e1e1e;
  & + & {
    margin-left: -3px;
  }
`;
const ViewButton = styled.button`
  display: flex;
  align-items: center;
  justify-content: center;
  width: 39px;
  height: 36px;
`;

/* matrix */
const Matrix = styled.div`
  flex: 1;
  position: relative;
  display: grid;
  grid-template-columns: repeat(13, minmax(0, 1fr));
  grid-template-rows: repeat(13, minmax(72px, 1fr));
  gap: 1px;
  background: #10191c;
`;
const Cell = styled.button`
  display: flex;
  flex-direction: column;
  align-items: flex-start;
  justify-content: space-between;
  padding: 5px 5px 3px;
  background: ${({ $green }) => ($green ? GREEN : BLUE)};
  color: #f5f5f5;
  font-weight: 500;
  text-shadow: 1px 1px 3px rgba(0, 0, 0, 0.6);
`;
const CellName = styled.span`
  font-size: 30px;
  line-height: 36px;
`;
const CellEv = styled.span`
  align-self: flex-end;
  font-size: 24px;
  line-height: 30px;
`;
const Zoomed = styled.div`
  position: absolute;
  right: 0;
  bottom: 0;
  width: calc(300% / 13 + 12px);
  height: calc(300% / 13 + 12px);
  display: flex;
  flex-direction: column;
  justify-content: space-between;
  padding: 4px 7px;
  border: 6px solid ${MINT};
  border-radius: 9px;
  background: ${GREEN};
  box-shadow: 0 0 24px rgba(0, 0, 0, 0.5);
  font-weight: 500;
  text-shadow: 1px 1px 3px rgba(0, 0, 0, 0.6);
`;
const ZoomedName = styled.span`
  font-size: 36px;
  line-height: 44px;
`;
const ZoomedEv = styled.span`
  align-self: flex-end;
  font-size: 30px;
  line-height: 36px;
`;

/* overview */
const PlayerRow = styled.div`
  display: flex;
  align-items: center;
  gap: 24px;
`;
const Players = styled.div`
  display: grid;
  grid-template-columns: repeat(8, 1fr);
  gap: 6px;
  width: 718px;
`;
const Player = styled.button`
  display: flex;
  flex-direction: column;
  align-items: center;
  justify-content: center;
  height: 56px;
  border-radius: 6px;
  background: #262626;
  color: ${({ $tone }) => ($tone === "hero" ? MINT : $tone === "villain" ? "#fff" : "#404040")};
  font-size: 21px;
  font-weight: 600;
  line-height: 22px;
`;
const Pot = styled.div`
  color: #9e9e9e;
  font-size: 21px;
  font-weight: 600;
`;
const PotLine = styled.div`
  display: flex;
  align-items: center;
  justify-content: center;
  gap: 12px;
  line-height: 28px;
`;
const Strong = styled.span`
  color: #fff;
`;
const Odds = styled.span`
  font-size: 18px;
  font-weight: 400;
`;

/* actions */
const ActionRow = styled.div`
  display: grid;
  grid-template-columns: 1fr 1fr;
  gap: 6px;
`;
const ActionCard = styled.button`
  display: flex;
  flex-direction: column;
  justify-content: space-between;
  height: 222px;
  padding: 12px 12px 8px;
  border-radius: 6px;
  background: ${({ $color }) => $color};
  font-weight: 500;
  text-align: left;
  text-shadow: 1px 1px 3px rgba(0, 0, 0, 0.5);
`;
const ActionName = styled.span`
  font-size: 42px;
  line-height: 52px;
`;
const ActionFoot = styled.span`
  display: flex;
  align-items: flex-end;
  justify-content: space-between;
  align-self: stretch;
`;
const Percent = styled.span`
  font-size: 66px;
  line-height: 60px;
`;
const Combos = styled.span`
  display: flex;
  flex-direction: column;
  font-size: 24px;
  line-height: 28px;
  text-align: right;
  small {
    color: rgba(245, 245, 245, 0.8);
    font-size: 17px;
    line-height: 22px;
  }
`;
const Bar = styled.div`
  display: flex;
  height: 36px;
  margin-top: 6px;
  border-radius: 5px;
  overflow: hidden;
`;
const BarPart = styled.div`
  background: ${({ $color }) => $color};
`;

/* hands */
const HandsSection = styled.section`
  flex: 1;
  display: flex;
  flex-direction: column;
`;
const HandGrid = styled.div`
  flex: 1;
  display: grid;
  grid-template-columns: repeat(3, 1fr);
  grid-template-rows: 1fr 1fr;
  gap: 2px 1px;
`;
const Hand = styled.div`
  display: flex;
  flex-direction: column;
  justify-content: space-between;
  padding-bottom: 3px;
  background: ${GREEN};
  color: #121212;
`;
const HandTop = styled.div`
  display: flex;
  justify-content: space-between;
`;
const HandCards = styled.div`
  display: flex;
  gap: 3px;
  height: 34px;
  padding: 0 7px;
  border-bottom-right-radius: 5px;
  background: #f5f5f5;
`;
const HalfCard = styled.span`
  display: flex;
  align-items: center;
  gap: 1px;
  color: ${({ $color }) => $color};
  font-size: 24px;
  font-weight: 500;
`;
const EvLabel = styled.span`
  padding: 12px 8px 0 0;
  line-height: 26px;
`;
const HandLine = styled.div`
  display: flex;
  justify-content: space-between;
  padding: 0 7px;
  font-size: 54px;
  font-weight: 300;
  line-height: 54px;
`;
